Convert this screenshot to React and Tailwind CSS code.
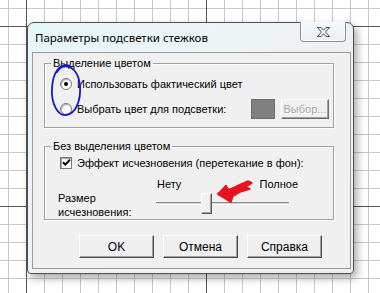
export default function App() {
  const font = { fontFamily: '"Liberation Sans", Arial, sans-serif' };
  return (
    <div
      className="relative w-[380px] h-[293px] overflow-hidden bg-white bg-[linear-gradient(to_right,#555_1px,transparent_1px),linear-gradient(to_bottom,#555_1px,transparent_1px),linear-gradient(to_right,#c8c8c8_1px,transparent_1px),linear-gradient(to_bottom,#c8c8c8_1px,transparent_1px)] bg-[size:180px_180px,180px_180px,18px_18px,18px_18px] bg-[position:26px_26px,26px_26px,8px_8px,8px_8px] pt-[22px] pl-[27px]"
    >
      {/* Dialog window */}
      <div className="w-[327px] h-[252px] rounded-t-[7px] rounded-b-[4px] border border-[#4f4f4f] bg-[linear-gradient(135deg,#e4f6fb_0%,#eef3f6_35%,#eeeeee_100%)] shadow-[3px_4px_8px_rgba(0,0,0,0.35)] flex flex-col">
        {/* Title bar */}
        <div className="h-[29px] flex items-start relative">
          <div
            className="pl-[7px] pt-[7px] text-[11.5px] leading-[16px] text-black"
            style={{ fontFamily: '"Noto Sans", "Open Sans", sans-serif' }}
          >
            Параметры подсветки стежков
          </div>
          <div className="ml-auto mr-[7px] w-[46px] h-[20px] -mt-px border border-[#8d8d8d] border-t-0 rounded-b-[4px] bg-[linear-gradient(to_bottom,#f4fbfd,#e9eff2)] shadow-[inset_1px_0_0_#fff,inset_-1px_0_0_#fff,inset_0_-1px_0_#fff] flex items-center justify-center">
            <svg width="15" height="12" viewBox="0 0 15 12">
              <path
                d="M1.5 1.5 H5 L7.5 4.3 L10 1.5 H13.5 L9.5 6 L13.5 10.5 H10 L7.5 7.7 L5 10.5 H1.5 L5.5 6 Z"
                fill="#fff"
                stroke="#4a4a4a"
                strokeWidth="1"
                strokeLinejoin="round"
              />
            </svg>
          </div>
        </div>
        {/* Client area */}
        <div
          className="ml-[4px] w-[319px] h-[217px] border border-[#9a9a9a] bg-[#f0f0f0] flex flex-col pt-[10px] pl-[11px] text-[11px] leading-[14px] text-black"
          style={font}
        >
          {/* Group 1 */}
          <div className="relative w-[290px] h-[65px] border border-[#a0a0a0] shadow-[inset_1px_1px_0_#fff,1px_1px_0_#fff] flex flex-col pt-[13px] pl-[15px]">
            <div className="absolute left-[6px] -top-[8px] px-[2px] bg-[#f0f0f0] leading-[14px]">Выделение цветом</div>
            <div className="flex items-center h-[14px]">
              <div className="w-[12px] h-[12px] rounded-full border border-[#7a7a7a] bg-white shadow-[inset_1px_1px_1px_#b0b0b0] flex items-center justify-center">
                <div className="w-[4px] h-[4px] rounded-full bg-black" />
              </div>
              <span className="ml-[5px]">Использовать фактический цвет</span>
            </div>
            <div className="flex items-center h-[20px] mt-[8px] pr-[4px]">
              <div className="w-[12px] h-[12px] rounded-full border border-[#7a7a7a] bg-white shadow-[inset_1px_1px_1px_#b0b0b0]" />
              <span className="ml-[5px]">Выбрать цвет для подсветки:</span>
              <div className="ml-auto w-[24px] h-[20px] bg-[#808080] border border-[#6e6e6e]" />
              <div className="ml-[6px] w-[48px] h-[20px] bg-[#f0f0f0] border border-t-white border-l-white border-r-[#6a6a6a] border-b-[#6a6a6a] shadow-[inset_-1px_-1px_0_#a0a0a0] flex items-center justify-center text-[#a3a3a3] [text-shadow:1px_1px_0_#fff]">
                Выбор...
              </div>
            </div>
          </div>

          {/* Group 2 */}
          <div className="relative mt-[18px] w-[290px] h-[74px] border border-[#a0a0a0] shadow-[inset_1px_1px_0_#fff,1px_1px_0_#fff] flex flex-col pt-[9px]">
            <div className="absolute left-[6px] -top-[8px] px-[2px] bg-[#f0f0f0] leading-[14px]">Без выделения цветом</div>
            <div className="flex items-center h-[13px] pl-[15px]">
              <div className="w-[12px] h-[12px] border border-[#7a7a7a] bg-white shadow-[inset_1px_1px_0_#a0a0a0] flex items-center justify-center">
                <svg width="9" height="9" viewBox="0 0 9 9">
                  <path d="M1 4.2 L3.3 6.6 L8 1.6" fill="none" stroke="#000" strokeWidth="2" />
                </svg>
              </div>
              <span className="ml-[5px]">Эффект исчезновения (перетекание в фон):</span>
            </div>
            <div className="flex mt-[8px]">
              <div className="pl-[13px] w-[111px] pt-[14px] leading-[14px]">
                <div>Размер</div>
                <div>исчезновения:</div>
              </div>
              <div className="flex flex-col w-[142px]">
                <div className="flex justify-between h-[14px] pl-[1px]">
                  <span>Нету</span>
                  <span>Полное</span>
                </div>
                <div className="relative mt-[2px] h-[21px] w-[133px]">
                  <div className="absolute left-0 right-0 top-[9px] h-[3px] border-t border-[#8a8a8a] border-b border-b-white bg-[#d4d4d4]" />
                  <div className="absolute left-[45px] top-0 w-[11px] h-[21px] bg-[#f0f0f0] border border-t-white border-l-white border-r-[#5a5a5a] border-b-[#5a5a5a] shadow-[inset_-1px_-1px_0_#a0a0a0]" />
                </div>
              </div>
            </div>
          </div>

          {/* Buttons */}
          <div className="flex gap-[9px] mt-[15px] ml-[35px]">
            {["OK", "Отмена", "Справка"].map((t) => (
              <div
                key={t}
                className="w-[75px] h-[23px] bg-[#f0f0f0] border border-t-white border-l-white border-r-[#4a4a4a] border-b-[#4a4a4a] shadow-[inset_-1px_-1px_0_#a0a0a0] flex items-center justify-center text-[12px]"
              >
                {t}
              </div>
            ))}
          </div>
        </div>
      </div>

      {/* Annotations */}
      <svg className="absolute left-0 top-0 pointer-events-none" width="380" height="293" viewBox="0 0 380 293">
        <path
          d="M70 66 C60 62 53 72 52 88 C51 104 58 116 66 115 C76 114 81 100 80 86 C79 73 72 64 62 67 C60 68 58 70 57 72"
          fill="none"
          stroke="#1616c8"
          strokeWidth="1.8"
          strokeLinecap="round"
        />
        <g stroke="#e8141e" strokeLinecap="round" strokeLinejoin="round" fill="#e8141e">
          <path d="M218 194 L226 186 L229 190 L239 185 L248 181 L252 183 L246 187 L250 189 L240 192 L233 196 L231 202 Z" strokeWidth="1.5" />
          <path d="M219 194 L250 183" strokeWidth="3" fill="none" />
          <path d="M219 194 L230 201" strokeWidth="2.5" fill="none" />
          <path d="M219 194 L226 186" strokeWidth="2.5" fill="none" />
        </g>
      </svg>
    </div>
  );
}
